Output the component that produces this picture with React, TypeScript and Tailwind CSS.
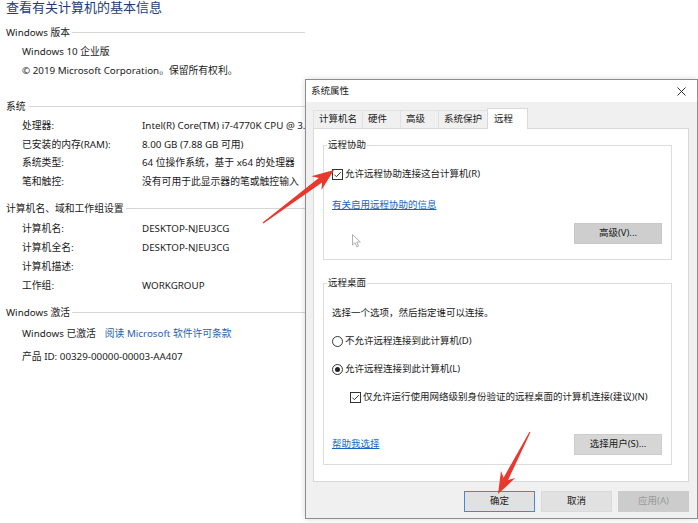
import React from "react";

const FONT = { fontFamily: '"Noto Sans", "Noto Sans CJK SC", sans-serif' };

function arrowPoints(
  x1: number, y1: number, x2: number, y2: number,
  headLen: number, headHalf: number, tailHalf: number, neckHalf: number
) {
  const dx = x2 - x1, dy = y2 - y1;
  const L = Math.hypot(dx, dy);
  const ux = dx / L, uy = dy / L;
  const nx = -uy, ny = ux;
  const P = (t: number, s: number) => `${(x1 + ux * t + nx * s).toFixed(1)},${(y1 + uy * t + ny * s).toFixed(1)}`;
  return [
    P(0, tailHalf),
    P(L - headLen + 5, neckHalf),
    P(L - headLen, headHalf),
    P(L, 0),
    P(L - headLen, -headHalf),
    P(L - headLen + 5, -neckHalf),
    P(0, -tailHalf),
  ].join(" ");
}

function CheckBox() {
  return (
    <svg width="11" height="11" viewBox="0 0 11 11" className="shrink-0">
      <rect x="0.5" y="0.5" width="10" height="10" fill="white" stroke="#333" />
      <path d="M2.3 5.6 L4.4 7.7 L8.8 3.1" fill="none" stroke="#333" strokeWidth="1" />
    </svg>
  );
}

function Radio({ on }: { on?: boolean }) {
  return (
    <svg width="11" height="11" viewBox="0 0 11 11" className="shrink-0">
      <circle cx="5.5" cy="5.5" r="5" fill="white" stroke="#333" />
      {on && <circle cx="5.5" cy="5.5" r="2.5" fill="#222" />}
    </svg>
  );
}

function SectionHead({ children, className = "" }: { children: React.ReactNode; className?: string }) {
  return (
    <div className={`flex items-center h-[19px] leading-[19px] ${className}`}>
      <span className="whitespace-nowrap">{children}</span>
      <div className="flex-1 h-px bg-[#d6d6d6] ml-[2px]" />
    </div>
  );
}

function Row({ label, value, h = "h-[19px] leading-[19px]" }: { label: string; value?: string; h?: string }) {
  return (
    <div className={`flex pl-[16px] overflow-hidden ${h}`}>
      <span className="w-[120px] shrink-0 whitespace-nowrap">{label}</span>
      <span className="whitespace-nowrap">{value}</span>
    </div>
  );
}

function Btn({ children, className = "" }: { children: React.ReactNode; className?: string }) {
  return (
    <div className={`h-[21px] flex items-center justify-center border whitespace-nowrap ${className}`}>{children}</div>
  );
}

function Tab({ children, w, active }: { children: React.ReactNode; w: string; active?: boolean }) {
  if (active) {
    return (
      <div className={`${w} pl-[6px] flex items-center whitespace-nowrap bg-white border-t border-l border-r border-[#d9d9d9] -mb-px relative z-10`}>
        {children}
      </div>
    );
  }
  return (
    <div className={`${w} pl-[5px] flex items-center whitespace-nowrap overflow-hidden border-t border-l border-[#e2e2e2] mt-[2px]`}>
      {children}
    </div>
  );
}

export default function App() {
  return (
    <div className="relative w-[698px] h-[523px] overflow-hidden bg-white text-[#1a1a1a]" style={FONT}>
      {/* Background page */}
      <div className="flex flex-col pl-[6px] text-[9.8px] w-[305px] overflow-hidden">
        <div className="h-[14px] leading-[14px] text-[13px] text-[#1e3c78] whitespace-nowrap" style={{ fontFamily: '"Noto Sans CJK SC", sans-serif' }}>
          查看有关计算机的基本信息
        </div>
        <SectionHead className="mt-[9px]">Windows 版本</SectionHead>
        <div className="pl-[16px] h-[19px] leading-[19px]">Windows 10 企业版</div>
        <div className="pl-[16px] h-[19px] leading-[19px] whitespace-nowrap">© 2019 Microsoft Corporation。保留所有权利。</div>

        <SectionHead className="mt-[17px]">系统</SectionHead>
        <div className="mt-[1px] flex flex-col">
          <Row label="处理器:" value="Intel(R) Core(TM) i7-4770K CPU @ 3.50GHz" h="h-[18.5px] leading-[18.5px]" />
          <Row label="已安装的内存(RAM):" value="8.00 GB (7.88 GB 可用)" h="h-[18.5px] leading-[18.5px]" />
          <Row label="系统类型:" value="64 位操作系统，基于 x64 的处理器" h="h-[18.5px] leading-[18.5px]" />
          <Row label="笔和触控:" value="没有可用于此显示器的笔或触控输入" h="h-[18.5px] leading-[18.5px]" />
        </div>

        <SectionHead className="mt-[8px]">计算机名、域和工作组设置</SectionHead>
        <div className="mt-[1px] flex flex-col">
          <Row label="计算机名:" value="DESKTOP-NJEU3CG" />
          <Row label="计算机全名:" value="DESKTOP-NJEU3CG" />
          <Row label="计算机描述:" value="" />
          <Row label="工作组:" value="WORKGROUP" />
        </div>

        <SectionHead className="mt-[8px]">Windows 激活</SectionHead>
        <div className="mt-[2px] pl-[16px] h-[19px] leading-[19px] flex whitespace-nowrap">
          <span>Windows 已激活</span>
          <span className="ml-[9px] text-[#2a63ad]">阅读 Microsoft 软件许可条款</span>
        </div>
        <div className="mt-[4px] pl-[16px] h-[19px] leading-[19px]">产品 ID: 00329-00000-00003-AA407</div>
      </div>

      {/* Dialog window */}
      <div className="absolute left-[305px] top-[79px] w-[393px] h-[440px] border border-[#8c8c8c] bg-[#f0f0f0] flex flex-col text-[9.5px] shadow-[0_0_6px_rgba(0,0,0,0.15)]">
        <div className="h-[22px] shrink-0 bg-white flex items-center justify-between pl-[5px] pr-[11px]">
          <span>系统属性</span>
          <svg width="9" height="9" viewBox="0 0 9 9">
            <path d="M0.5 0.5 L8.5 8.5 M8.5 0.5 L0.5 8.5" stroke="#333" strokeWidth="1" />
          </svg>
        </div>

        <div className="pl-[7px] pr-[8px] pt-[6px] flex flex-col">
          {/* Tabs */}
          <div className="flex h-[20px] items-stretch">
            <Tab w="w-[49px]">计算机名</Tab>
            <Tab w="w-[38px]">硬件</Tab>
            <Tab w="w-[38px]">高级</Tab>
            <Tab w="w-[49px]">系统保护</Tab>
            <Tab w="w-[41px]" active>远程</Tab>
          </div>

          {/* Panel */}
          <div className="h-[354px] bg-white border border-[#d9d9d9] pl-[9px] pr-[16px] pt-[10px] flex flex-col">
            <fieldset className="border border-[#dcdcdc] px-0 pb-[11px]">
              <legend className="ml-[3px] px-[1px] leading-[12px]">远程协助</legend>
              <div className="pl-[8px] pr-[9px] flex flex-col">
                <div className="mt-[16px] h-[14px] flex items-center gap-[2px]">
                  <CheckBox />
                  <span>允许远程协助连接这台计算机(R)</span>
                </div>
                <div className="mt-[17px] h-[14px] flex items-center">
                  <span className="text-[#1565c0] underline">有关启用远程协助的信息</span>
                </div>
                <div className="mt-[11px] flex justify-between items-start">
                  <svg width="10" height="14" viewBox="0 0 10 14" className="ml-[20px] mt-[11px]">
                    <path d="M0.5 0.5 L0.5 11 L3 8.6 L4.8 12.8 L6.5 12.1 L4.8 8 L8.3 8 Z" fill="white" stroke="#a6a6a6" strokeWidth="0.9" />
                  </svg>
                  <Btn className="w-[88px] bg-[#cecece] border-[#c8c8c8]">高级(V)...</Btn>
                </div>
              </div>
            </fieldset>

            <fieldset className="mt-[17px] border border-[#dcdcdc] px-0 pb-[9px]">
              <legend className="ml-[3px] px-[1px] leading-[12px]">远程桌面</legend>
              <div className="pl-[8px] pr-[9px] flex flex-col">
                <div className="mt-[17px] h-[14px] flex items-center">选择一个选项，然后指定谁可以连接。</div>
                <div className="mt-[14px] h-[14px] flex items-center gap-[2px]">
                  <Radio />
                  <span>不允许远程连接到此计算机(D)</span>
                </div>
                <div className="mt-[14px] h-[14px] flex items-center gap-[2px]">
                  <Radio on />
                  <span>允许远程连接到此计算机(L)</span>
                </div>
                <div className="mt-[14px] h-[14px] flex items-center gap-[2px] pl-[18px]">
                  <CheckBox />
                  <span>仅允许运行使用网络级别身份验证的远程桌面的计算机连接(建议)(N)</span>
                </div>
                <div className="mt-[30px] flex justify-between items-center">
                  <span className="text-[#1565c0] underline">帮助我选择</span>
                  <Btn className="w-[88px] bg-[#d6d6d6] border-[#cdcdcd]">选择用户(S)...</Btn>
                </div>
              </div>
            </fieldset>
          </div>
        </div>

        {/* Footer buttons */}
        <div className="mt-[9px] pr-[8px] flex justify-end gap-[6px]">
          <Btn className="w-[71px] bg-[#e1e1e1] border-[#3f8bd6]">确定</Btn>
          <Btn className="w-[71px] bg-[#e1e1e1] border-[#dadada]">取消</Btn>
          <Btn className="w-[71px] bg-[#cccccc] border-[#cccccc] text-[#9a9a9a]">应用(A)</Btn>
        </div>
      </div>

      {/* Red annotation arrows */}
      <svg className="absolute left-0 top-0 pointer-events-none" width="698" height="523">
        <defs>
          <linearGradient id="rg" x1="0" y1="0" x2="1" y2="1">
            <stop offset="0" stopColor="#f0473a" />
            <stop offset="1" stopColor="#e12a22" />
          </linearGradient>
        </defs>
        <polygon points={arrowPoints(263, 223, 334, 170, 22, 8.5, 0.6, 2.8)} fill="url(#rg)" />
        <polygon points={arrowPoints(530, 432, 498, 494, 22, 8, 0.6, 2.6)} fill="url(#rg)" />
      </svg>
    </div>
  );
}
